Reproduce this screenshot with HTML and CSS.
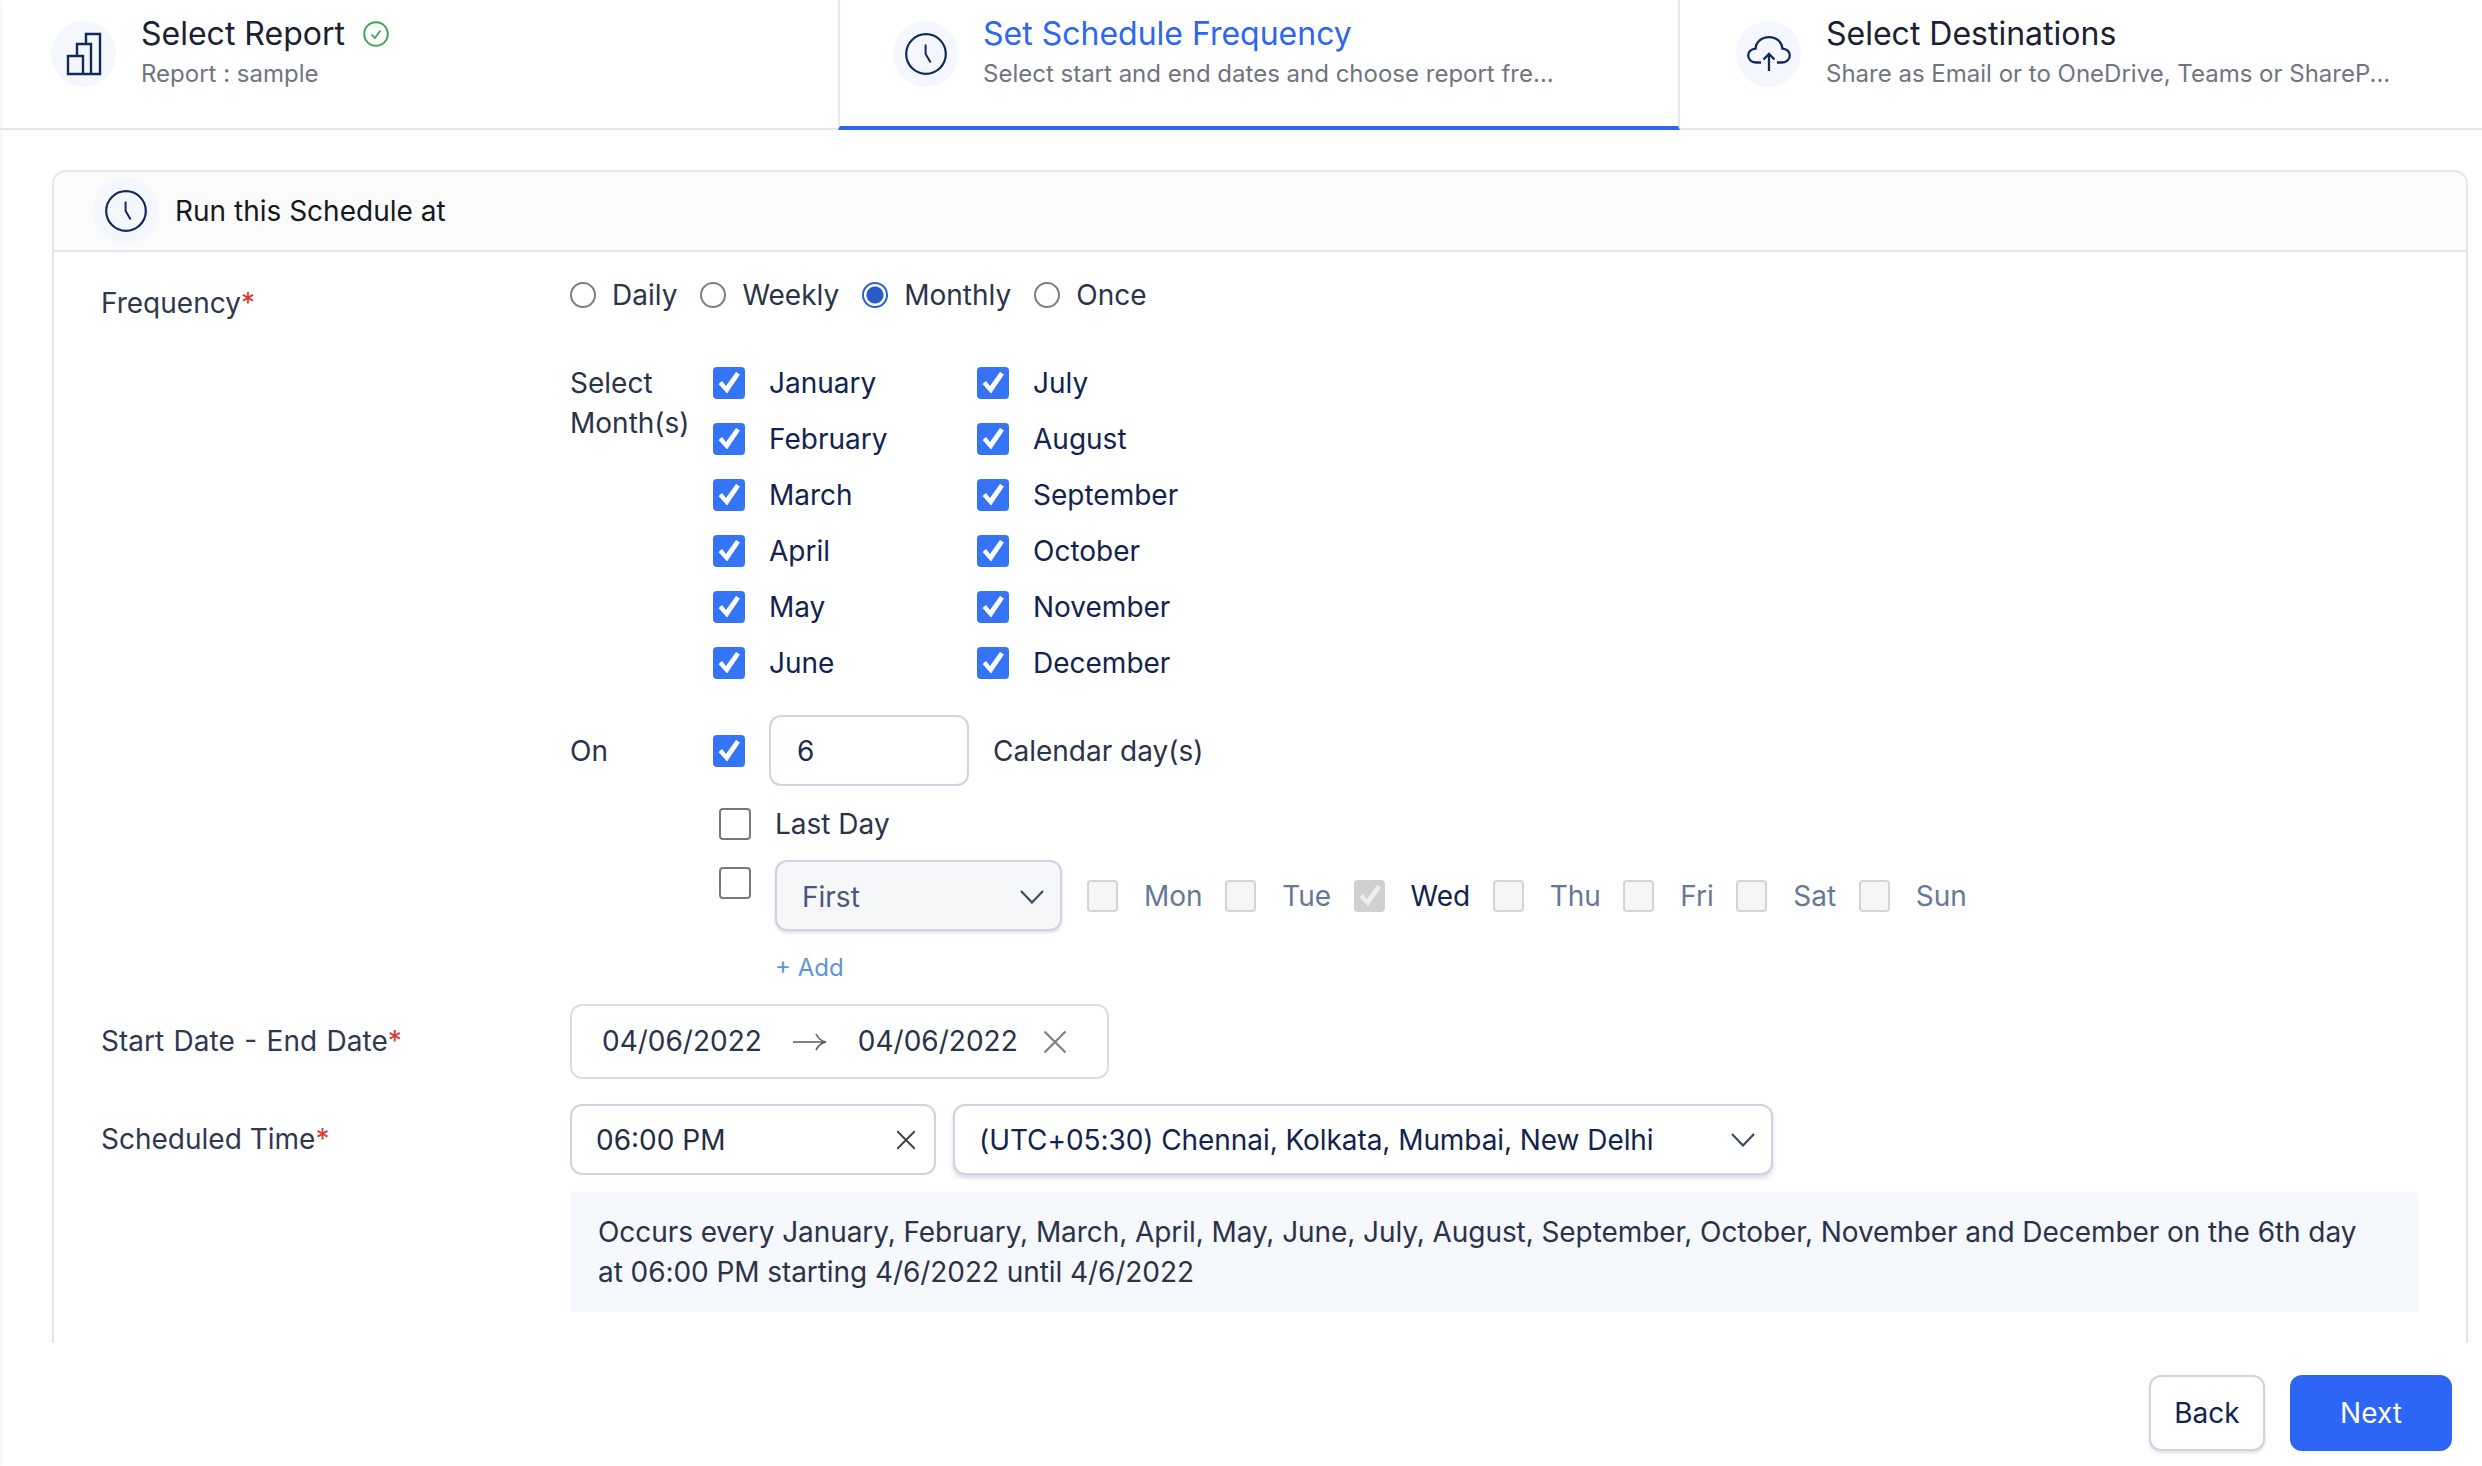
FILE: index.html
```html
<!DOCTYPE html>
<html lang="en">
<head>
<meta charset="utf-8">
<title>Set Schedule Frequency</title>
<link rel="stylesheet" href="styles.css">
</head>
<body>
<svg class="defs" width="0" height="0" aria-hidden="true">
  <symbol id="chk" viewBox="0 0 32 32"><path d="M5.5 17 L9 14 L13 19 L23 5 L27 7.5 L14 26.5 Z" fill="currentColor"/></symbol>
  <symbol id="clock" viewBox="0 0 42 42"><circle cx="21" cy="21" r="19.8" fill="none" stroke="currentColor" stroke-width="2.2"/><path d="M20.6 11.5 V21 L25.6 29.5" fill="none" stroke="currentColor" stroke-width="2"/></symbol>
  <symbol id="chev" viewBox="0 0 24 14"><path d="M1 1 L12 12.5 L23 1" fill="none" stroke="currentColor" stroke-width="2.2"/></symbol>
  <symbol id="x" viewBox="0 0 24 24"><path d="M1.5 1.5 L22.5 22.5 M22.5 1.5 L1.5 22.5" fill="none" stroke="currentColor" stroke-width="2.2"/></symbol>
</svg>

<nav class="tabs">
  <div class="tab tab-first">
    <span class="tab-icon">
      <svg class="ic-bars" viewBox="0 0 36 44"><path d="M2 24 H17 V42 H2 Z M11 24 V12 H25 V42 M20 12 V2 H34 V42 H2" fill="none" stroke="#12295c" stroke-width="2.4"/></svg>
    </span>
    <div class="tab-text">
      <div class="tab-title">Select Report
        <svg class="ic-ok" viewBox="0 0 26 26"><circle cx="13" cy="13" r="11.8" fill="none" stroke="#3fa653" stroke-width="2"/><path d="M8.5 13.5 L11.8 17 L17.5 9.5" fill="none" stroke="#3fa653" stroke-width="1.8"/></svg>
      </div>
      <div class="tab-sub">Report : sample</div>
    </div>
  </div>
  <div class="tab tab-active">
    <span class="tab-icon"><svg class="ic-clock"><use href="#clock"/></svg></span>
    <div class="tab-text">
      <div class="tab-title">Set Schedule Frequency</div>
      <div class="tab-sub">Select start and end dates and choose report fre...</div>
    </div>
  </div>
  <div class="tab tab-last">
    <span class="tab-icon">
      <svg class="ic-cloud" viewBox="0 0 44 36"><path d="M14 26.5 H9 C4 26.5 1.2 23 1.2 19.2 C1.2 15.6 4.4 12.8 8.6 12.6 C9 6 14.5 1.2 22 1.2 C29.5 1.2 35 6 35.4 12.6 C39.6 12.8 42.8 15.6 42.8 19.2 C42.8 23 40 26.5 35 26.5 H30" fill="none" stroke="#12295c" stroke-width="2.3"/><path d="M22 35 V18 M16.5 23.5 L22 18 L27.5 23.5" fill="none" stroke="#12295c" stroke-width="2.3"/></svg>
    </span>
    <div class="tab-text">
      <div class="tab-title">Select Destinations</div>
      <div class="tab-sub">Share as Email or to OneDrive, Teams or ShareP...</div>
    </div>
  </div>
</nav>

<main class="main">
  <section class="card">
    <header class="card-head">
      <span class="tab-icon"><svg class="ic-clock"><use href="#clock"/></svg></span>
      <h2 class="card-title">Run this Schedule at</h2>
    </header>
    <div class="card-body">
      <div class="label label-freq">Frequency<span class="req">*</span></div>
      <div class="field">
        <div class="radios">
          <label class="radio"><span class="dot"></span>Daily</label>
          <label class="radio"><span class="dot"></span>Weekly</label>
          <label class="radio"><span class="dot dot-on"></span>Monthly</label>
          <label class="radio"><span class="dot"></span>Once</label>
        </div>

        <div class="sub-row months-row">
          <div class="sub-label">Select Month(s)</div>
          <div class="months">
            <div class="opt"><span class="cb"><svg><use href="#chk"/></svg></span>January</div>
            <div class="opt"><span class="cb"><svg><use href="#chk"/></svg></span>July</div>
            <div class="opt"><span class="cb"><svg><use href="#chk"/></svg></span>February</div>
            <div class="opt"><span class="cb"><svg><use href="#chk"/></svg></span>August</div>
            <div class="opt"><span class="cb"><svg><use href="#chk"/></svg></span>March</div>
            <div class="opt"><span class="cb"><svg><use href="#chk"/></svg></span>September</div>
            <div class="opt"><span class="cb"><svg><use href="#chk"/></svg></span>April</div>
            <div class="opt"><span class="cb"><svg><use href="#chk"/></svg></span>October</div>
            <div class="opt"><span class="cb"><svg><use href="#chk"/></svg></span>May</div>
            <div class="opt"><span class="cb"><svg><use href="#chk"/></svg></span>November</div>
            <div class="opt"><span class="cb"><svg><use href="#chk"/></svg></span>June</div>
            <div class="opt"><span class="cb"><svg><use href="#chk"/></svg></span>December</div>
          </div>
        </div>

        <div class="sub-row on-row">
          <div class="sub-label">On</div>
          <div class="on-line">
            <span class="cb"><svg><use href="#chk"/></svg></span>
            <div class="box box-day">6</div>
            <span class="plain">Calendar day(s)</span>
          </div>
        </div>

        <div class="sub-row last-row">
          <div class="sub-label"></div>
          <div class="indent-line">
            <span class="cb cb-off"></span>
            <span class="plain">Last Day</span>
          </div>
        </div>

        <div class="sub-row week-row">
          <div class="sub-label"></div>
          <div class="indent-line week-line">
            <span class="cb cb-off cb-top"></span>
            <div class="box box-first">First<svg class="ic-chev"><use href="#chev"/></svg></div>
            <div class="days">
              <span class="day"><span class="cb cb-dis"></span>Mon</span>
              <span class="day"><span class="cb cb-dis"></span>Tue</span>
              <span class="day day-on"><span class="cb cb-dis-on"><svg><use href="#chk"/></svg></span>Wed</span>
              <span class="day"><span class="cb cb-dis"></span>Thu</span>
              <span class="day"><span class="cb cb-dis"></span>Fri</span>
              <span class="day"><span class="cb cb-dis"></span>Sat</span>
              <span class="day"><span class="cb cb-dis"></span>Sun</span>
            </div>
          </div>
        </div>

        <div class="add">+ Add</div>
      </div>

      <div class="label label-date">Start Date - End Date<span class="req">*</span></div>
      <div class="field field-date">
        <div class="box box-range">
          <span>04/06/2022</span>
          <svg class="ic-arrow" viewBox="0 0 34 18"><path d="M0 9 H33 M23 1 C25 5 28 8 33 9 C28 10 25 13 23 17" fill="none" stroke="#555c66" stroke-width="1.6"/></svg>
          <span>04/06/2022</span>
          <svg class="ic-x-grey"><use href="#x"/></svg>
        </div>
      </div>

      <div class="label label-time">Scheduled Time<span class="req">*</span></div>
      <div class="field field-time">
        <div class="time-line">
          <div class="box box-time">06:00 PM<svg class="ic-x"><use href="#x"/></svg></div>
          <div class="box box-zone">(UTC+05:30) Chennai, Kolkata, Mumbai, New Delhi<svg class="ic-chev"><use href="#chev"/></svg></div>
        </div>
        <p class="info">Occurs every January, February, March, April, May, June, July, August, September, October, November and December on the 6th day at 06:00 PM starting 4/6/2022 until 4/6/2022</p>
      </div>
    </div>
  </section>

  <footer class="actions">
    <button class="btn btn-back">Back</button>
    <button class="btn btn-next">Next</button>
  </footer>
</main>
</body>
</html>
```

FILE: styles.css
```css
* { box-sizing: border-box; }

html, body {
  margin: 0;
  height: 1466px;
  overflow: hidden;
  background: #fff;
}

body {
  font-family: Inter, "Liberation Sans", sans-serif;
  font-size: 28px;
  color: #2a3349;
  box-shadow: inset 3px 0 3px -2px #f1f1f3;
}

.defs { position: absolute; }

/* Wizard tabs */
.tabs {
  display: grid;
  grid-template-columns: 838px 842px 1fr;
  height: 130px;
}

.tab {
  display: flex;
  align-items: flex-start;
  gap: 25px;
  padding: 21px 0 0 56px;
  border-bottom: 2px solid #e5e7ed;
}

.tab-first { padding-left: 51px; }

.tab-active {
  padding-left: 53px;
  border-left: 2px solid #e5e7ed;
  border-right: 2px solid #e5e7ed;
  border-bottom: 4px solid #2d66f5;
}

.tab-icon {
  flex: none;
  display: flex;
  align-items: center;
  justify-content: center;
  width: 65px;
  height: 66px;
  border-radius: 50%;
  background: #f4f8fe;
}

.tab-text { margin-top: -7px; }

.tab-title {
  display: flex;
  align-items: center;
  gap: 18px;
  height: 40px;
  font-size: 32px;
  line-height: 40px;
  color: #1b2133;
}

.tab-active .tab-title { color: #2d66f5; }

.tab-sub {
  margin-top: 4px;
  font-size: 24px;
  line-height: 32px;
  color: #71757f;
}

.ic-bars { width: 36px; height: 44px; }
.ic-clock { width: 42px; height: 42px; color: #12295c; }
.ic-cloud { width: 44px; height: 36px; }
.ic-ok { width: 26px; height: 26px; }

/* Card */
.main { padding: 40px 14px 0 52px; }

.card {
  height: 1173px;
  overflow: hidden;
  border: 2px solid #e0e6ee;
  border-bottom: 0;
  border-radius: 14px 14px 0 0;
}

.card-head {
  display: flex;
  align-items: center;
  gap: 17px;
  height: 80px;
  padding-left: 39px;
  background: #fbfbfc;
  border-bottom: 2px solid #e0e6ee;
}

.card-title {
  margin: 0;
  font-size: 28px;
  font-weight: 400;
  color: #16181f;
}

.card-body {
  display: grid;
  grid-template-columns: 469px 1848px;
  padding: 23px 0 32px 47px;
}

.label { line-height: 40px; color: #2e3950; }
.label-freq { padding-top: 8px; }
.label-date { padding-top: 17px; margin-top: 20px; word-spacing: 1.6px; }
.label-time { padding-top: 15px; margin-top: 25px; }
.req { color: #d93a2f; }

.field-date { margin-top: 20px; }
.field-time { margin-top: 25px; }

/* Radios */
.radios {
  display: flex;
  align-items: center;
  height: 40px;
}

.radio {
  display: flex;
  align-items: center;
  gap: 16px;
  margin-right: 23px;
}

.dot {
  width: 26px;
  height: 26px;
  border: 2px solid #7d7f84;
  border-radius: 50%;
}

.dot-on {
  border-color: #2a62d0;
  background: radial-gradient(circle, #2a5cc7 0 8px, #fff 9px);
}

/* Sub rows */
.sub-row {
  display: grid;
  grid-template-columns: 143px 1fr;
}

.sub-label { line-height: 40px; }

.months-row { margin-top: 52px; }
.months-row .sub-label { margin-top: -4px; }

.months {
  display: grid;
  grid-template-columns: 264px 1fr;
  grid-auto-rows: 32px;
  row-gap: 24px;
  color: #11244f;
}

.opt {
  display: flex;
  align-items: center;
  gap: 24px;
  white-space: nowrap;
}

.cb {
  flex: none;
  display: block;
  width: 32px;
  height: 32px;
  border-radius: 4px;
  background: #3574f6;
  color: #fff;
}

.cb svg { display: block; width: 32px; height: 32px; }

.cb-off {
  background: #fff;
  border: 2px solid #77797e;
}

.cb-dis {
  background: #f6f6f7;
  border: 2px solid #d3d4d6;
}

.cb-dis-on {
  background: #cfd0d1;
  color: #eeeeee;
}

.on-row { margin-top: 36px; }
.last-row { margin-top: 21px; }
.week-row { margin-top: 19px; }

.on-line {
  display: flex;
  align-items: center;
  gap: 24px;
}

.sub-label:empty { min-height: 1px; }

.on-row .sub-label { align-self: center; }

.indent-line {
  display: flex;
  align-items: center;
  gap: 24px;
  padding-left: 6px;
}

.week-line { align-items: flex-start; }
.cb-top { margin-top: 7px; }

.plain { color: #2a3349; }

.box {
  display: flex;
  align-items: center;
  border: 2px solid #cfd4e0;
  border-radius: 12px;
  background: #fff;
  color: #222c42;
}

.box-day {
  width: 200px;
  height: 71px;
  padding-left: 26px;
}

.box-first {
  justify-content: space-between;
  width: 287px;
  height: 71px;
  padding: 2px 16px 0 25px;
  background: #f6f7f9;
  color: #47587a;
  box-shadow: 0 2px 3px rgba(120, 130, 160, .25);
}

.ic-chev {
  flex: none;
  width: 24px;
  height: 14px;
  color: #3c4a66;
}

.days {
  display: flex;
  align-items: center;
  gap: 22.5px;
  height: 32px;
  margin-top: 20px;
  margin-left: 1px;
  color: #66789a;
}

.day {
  display: flex;
  align-items: center;
  gap: 26px;
}

.day-on { color: #11244f; }
.day .cb { width: 31px; }

.add {
  margin-top: 21px;
  margin-left: 205px;
  font-size: 24px;
  line-height: 32px;
  color: #5f94d6;
}

/* Date and time */
.box-range {
  width: 539px;
  height: 75px;
  padding: 0 0 2px 30px;
  border-color: #dcdde0;
  color: #2a3349;
}

.ic-arrow { width: 34px; height: 18px; margin: 2px 31px 0; flex: none; }

.ic-x-grey {
  width: 24px;
  height: 24px;
  margin: 3px 0 0 25px;
  color: #7d8085;
}

.time-line {
  display: flex;
  gap: 17px;
}

.box-time {
  justify-content: space-between;
  width: 366px;
  height: 71px;
  padding: 0 18px 0 24px;
}

.ic-x { width: 20px; height: 20px; color: #3b3f46; }

.box-zone {
  justify-content: space-between;
  width: 820px;
  height: 71px;
  padding: 0 16px 0 24px;
  color: #11244f;
  letter-spacing: -0.07px;
  box-shadow: 0 3px 4px rgba(120, 130, 160, .3);
}

.info {
  width: 1848px;
  height: 120px;
  margin: 17px 0 0;
  padding: 20px 50px 20px 28px;
  line-height: 40px;
  letter-spacing: -0.07px;
  background: #f5f8fd;
  color: #2a3349;
}

/* Footer */
.actions {
  display: flex;
  justify-content: flex-end;
  gap: 25px;
  margin-top: 32px;
  padding-right: 16px;
}

.btn {
  height: 76px;
  border-radius: 12px;
  font-family: inherit;
  font-size: 28px;
}

.btn-back {
  width: 116px;
  background: #fff;
  border: 2px solid #cfd4e0;
  color: #11244f;
  box-shadow: 0 2px 3px rgba(120, 130, 160, .25);
}

.btn-next {
  width: 162px;
  background: #2d66f5;
  border: 0;
  color: #fff;
}
```
